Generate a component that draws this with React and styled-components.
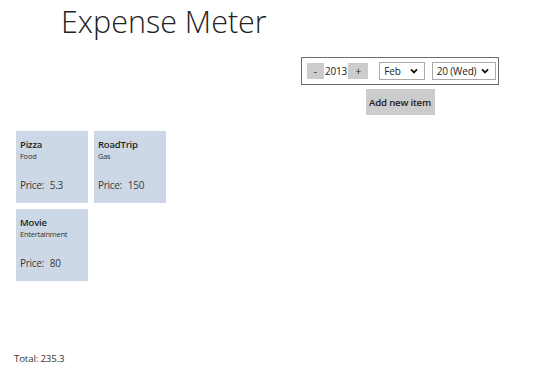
import React from "react";
import styled, { createGlobalStyle } from "styled-components";

const Global = createGlobalStyle`
  html, body { margin: 0; padding: 0; background: #fff; }
  body { font-family: "Open Sans", "Noto Sans", sans-serif; color: #222; }
`;

const Page = styled.div`
  width: 550px;
  height: 381px;
  display: flex;
  flex-direction: column;
  overflow: hidden;
`;

const Title = styled.h1`
  margin: 2px 0 0 61px;
  font-size: 30.5px;
  font-weight: 300;
  line-height: 38px;
  color: #222;
`;

const ControlsColumn = styled.div`
  align-self: flex-end;
  margin: 17px 51px 0 0;
  display: flex;
  flex-direction: column;
  align-items: center;
  gap: 4px;
`;

const Panel = styled.div`
  width: 198px;
  box-sizing: border-box;
  display: flex;
  align-items: center;
  height: 28px;
  padding: 0 2px 0 5px;
  border: 1px solid #6e6e6e;
`;

const StepButton = styled.div`
  width: ${(p) => p.$w}px;
  height: 16px;
  background: #cccccc;
  display: flex;
  align-items: center;
  justify-content: center;
  font-size: 10px;
  color: #222;
`;

const Year = styled.span`
  width: 25px;
  text-align: center;
  font-size: 10px;
  letter-spacing: -0.2px;
  color: #222;
`;

const Select = styled.div`
  width: ${(p) => p.$w}px;
  height: 18px;
  box-sizing: border-box;
  margin-left: ${(p) => p.$ml}px;
  border: 1px solid #a9a9a9;
  background: #fff;
  display: flex;
  align-items: center;
  justify-content: space-between;
  padding: 0 6px 0 4px;
  font-size: 10px;
  letter-spacing: -0.15px;
  color: #222;
`;

const AddButton = styled.div`
  width: 69px;
  height: 26px;
  background: #cccccc;
  display: flex;
  align-items: center;
  justify-content: center;
  font-size: 9.7px;
  font-weight: 600;
  letter-spacing: -0.2px;
  color: #222;
`;

const Grid = styled.div`
  margin: 16px 0 0 16px;
  display: grid;
  grid-template-columns: repeat(2, 72px);
  grid-auto-rows: 72px;
  gap: 6px;
`;

const Card = styled.div`
  background: #cdd8e6;
  padding: 7px 4px;
  box-sizing: border-box;
  display: flex;
  flex-direction: column;
`;

const CardName = styled.div`
  font-size: 9.5px;
  font-weight: 600;
  line-height: 13px;
  letter-spacing: -0.2px;
  color: #1e1e1e;
`;

const CardCategory = styled.div`
  font-size: 7.5px;
  line-height: 11px;
  letter-spacing: -0.25px;
  color: #333;
`;

const CardPrice = styled.div`
  margin-top: 17px;
  font-size: 10px;
  line-height: 13px;
  letter-spacing: -0.3px;
  color: #3a3a3a;
  span { margin-left: 6px; }
`;

const Total = styled.div`
  margin-top: auto;
  margin-bottom: 16px;
  margin-left: 14px;
  font-size: 9.7px;
  letter-spacing: -0.15px;
  color: #333;
`;

const Chevron = () => (
  <svg width="8" height="6" viewBox="0 0 8 6">
    <path d="M1 1.4 L4 4.4 L7 1.4" fill="none" stroke="#111" strokeWidth="1.8" />
  </svg>
);

const items = [
  { name: "Pizza", cat: "Food", price: "5.3" },
  { name: "RoadTrip", cat: "Gas", price: "150" },
  { name: "Movie", cat: "Entertainment", price: "80" },
];

export default function App() {
  return (
    <Page>
      <Global />
      <Title>Expense Meter</Title>
      <ControlsColumn>
        <Panel>
          <StepButton $w={17}>-</StepButton>
          <Year>2013</Year>
          <StepButton $w={20}>+</StepButton>
          <Select $w={46} $ml={11}>
            <span>Feb</span>
            <Chevron />
          </Select>
          <Select $w={65} $ml={7}>
            <span>20 (Wed)</span>
            <Chevron />
          </Select>
        </Panel>
        <AddButton>Add new item</AddButton>
      </ControlsColumn>
      <Grid>
        {items.map((it) => (
          <Card key={it.name}>
            <CardName>{it.name}</CardName>
            <CardCategory>{it.cat}</CardCategory>
            <CardPrice>
              Price:<span>{it.price}</span>
            </CardPrice>
          </Card>
        ))}
      </Grid>
      <Total>Total: 235.3</Total>
    </Page>
  );
}
